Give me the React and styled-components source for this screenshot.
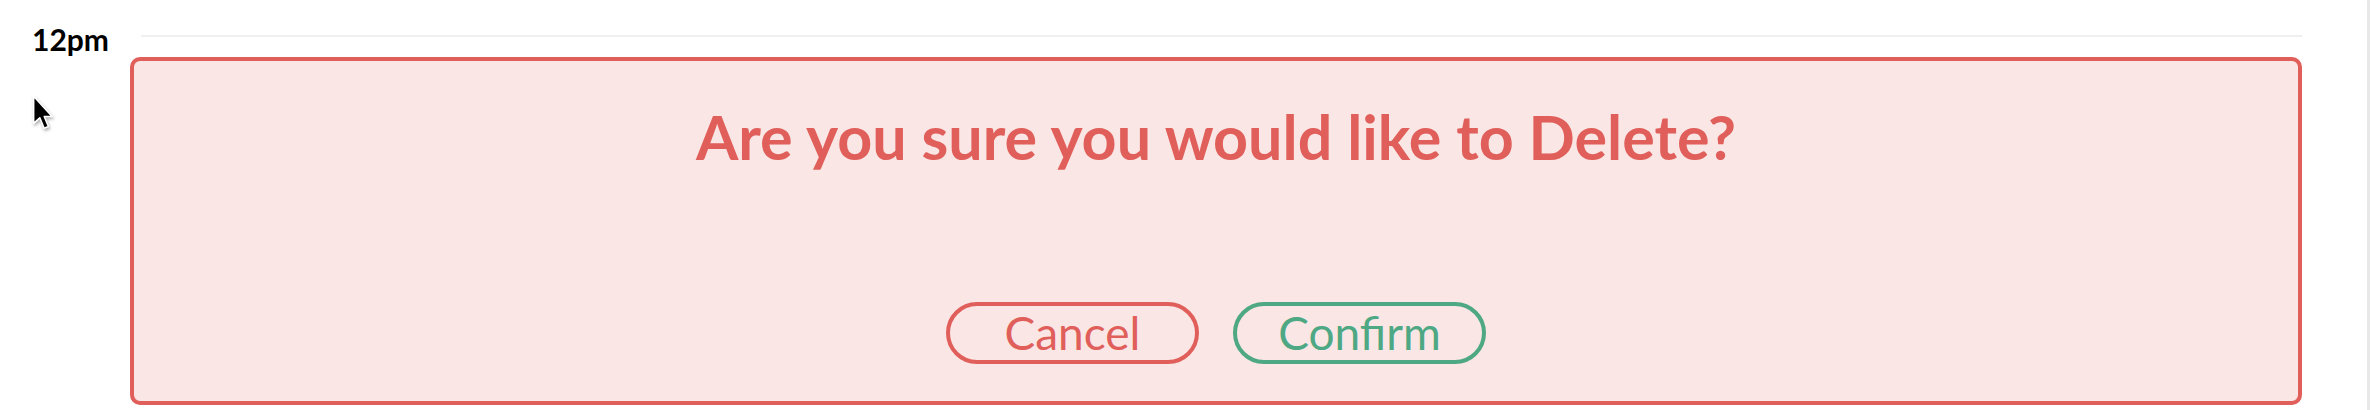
import React from "react";
import styled, { createGlobalStyle } from "styled-components";

const GlobalStyle = createGlobalStyle`
  html, body {
    margin: 0;
    padding: 0;
    background: #fff;
  }
  body {
    font-family: Lato, "Noto Sans", "Liberation Sans", sans-serif;
    overflow: hidden;
  }
`;

const RED = "#e05f5a";
const GREEN = "#4ea884";

function Cursor() {
  return (
    <CursorIcon viewBox="0 0 20 30" width="25" height="37">
      <path
        d="M2 1 L2 23 L7 18.5 L10.5 27 L14 25.5 L10.6 17.4 L17 17.4 Z"
        fill="#000"
        stroke="#fff"
        strokeWidth="1.3"
        strokeLinejoin="round"
      />
    </CursorIcon>
  );
}

export default function App() {
  return (
    <Page>
      <GlobalStyle />
      <Hour>
        <TimeLabel>12pm</TimeLabel>
        <Slot>
          <GridLine />
          <ConfirmCard>
            <Question>Are you sure you would like to Delete?</Question>
            <Actions>
              <ActionButton $color={RED}>Cancel</ActionButton>
              <ActionButton $color={GREEN}>Confirm</ActionButton>
            </Actions>
          </ConfirmCard>
        </Slot>
      </Hour>
      <Cursor />
      <ScrollTrack />
    </Page>
  );
}

const Page = styled.div`
  position: relative;
  display: flex;
  width: 2370px;
  height: 410px;
  overflow: hidden;
`;

const Hour = styled.div`
  flex: 1;
  display: flex;
  align-items: flex-start;
`;

const TimeLabel = styled.div`
  width: 109px;
  flex: none;
  margin-top: 21px;
  text-align: right;
  font-size: 30px;
  font-weight: 700;
  line-height: 36px;
  color: #000;
`;

const Slot = styled.div`
  flex: 1;
  margin-left: 21px;
  margin-right: 65px;
  padding-top: 35px;
`;

const GridLine = styled.div`
  height: 2px;
  margin-left: 11px;
  background: #efefef;
`;

const ConfirmCard = styled.div`
  box-sizing: border-box;
  height: 348px;
  margin-top: 20px;
  border: 4px solid ${RED};
  border-radius: 10px;
  background: #fae6e5;
  display: flex;
  flex-direction: column;
  align-items: center;
  justify-content: space-between;
  padding: 36px 0 37px;
`;

const Question = styled.h2`
  margin: 0;
  font-size: 61px;
  font-weight: 700;
  line-height: 80px;
  color: ${RED};
`;

const Actions = styled.div`
  display: flex;
  gap: 34px;
`;

const ActionButton = styled.button`
  box-sizing: border-box;
  width: 253px;
  height: 62px;
  padding: 0;
  border: 4px solid ${(p) => p.$color};
  border-radius: 31px;
  background: transparent;
  color: ${(p) => p.$color};
  font-family: inherit;
  font-size: 46px;
  font-weight: 400;
  line-height: 1;
  cursor: pointer;
`;

const CursorIcon = styled.svg`
  position: absolute;
  left: 31px;
  top: 95px;
  filter: drop-shadow(1px 2px 1.5px rgba(0, 0, 0, 0.3));
`;

const ScrollTrack = styled.div`
  width: 3px;
  flex: none;
  background: #e8e8e8;
`;
